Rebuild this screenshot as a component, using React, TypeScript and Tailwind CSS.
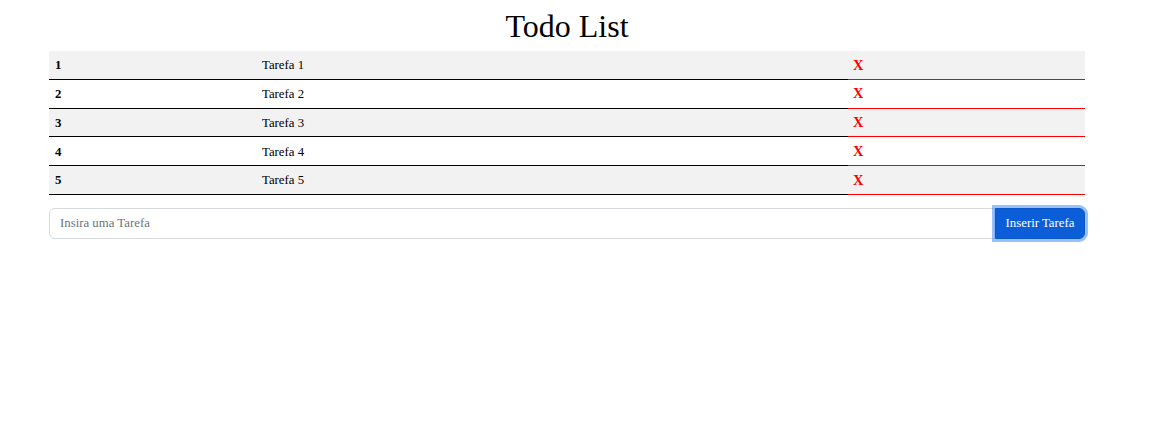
import { useState } from "react";

const initialTasks = ["Tarefa 1", "Tarefa 2", "Tarefa 3", "Tarefa 4", "Tarefa 5"];

export default function App() {
  const [tasks, setTasks] = useState(initialTasks);
  const [text, setText] = useState("");

  const addTask = () => {
    if (!text.trim()) return;
    setTasks([...tasks, text.trim()]);
    setText("");
  };

  return (
    <div className="min-h-screen bg-white text-black font-['Liberation_Serif',serif]">
      <div className="ml-[49px] w-[1036px] pt-[8px]">
        <h1 className="text-center text-[32px] leading-[37px] mb-[6px]">Todo List</h1>

        <div className="flex flex-col">
          {tasks.map((task, i) => (
            <TaskRow
              key={i}
              index={i + 1}
              label={task}
              striped={i % 2 === 0}
              onRemove={() => setTasks(tasks.filter((_, j) => j !== i))}
            />
          ))}
        </div>

        <div className="mt-[13px] flex items-stretch">
          <input
            value={text}
            onChange={(e) => setText(e.target.value)}
            placeholder="Insira uma Tarefa"
            className="h-[31px] flex-1 rounded-l-[6px] border border-[#d6d9dd] px-[10px] text-[12.8px] outline-none placeholder:text-[#6c757d]"
          />
          <button
            onClick={addTask}
            className="h-[31px] w-[90px] rounded-r-[6px] border border-[#0a58ca] bg-[#0b5ed7] text-[12.8px] text-white shadow-[0_0_0_3px_rgba(49,132,253,0.5)]"
          >
            Inserir Tarefa
          </button>
        </div>
      </div>
    </div>
  );
}

function TaskRow({
  index,
  label,
  striped,
  onRemove,
}: {
  index: number;
  label: string;
  striped: boolean;
  onRemove: () => void;
}) {
  return (
    <div className={`flex h-[28.8px] text-[12.8px] ${striped ? "bg-[#f2f2f2]" : "bg-white"}`}>
      <div className="flex w-[207px] items-center border-b border-black px-[6px] pt-[2px] font-bold">{index}</div>
      <div className="flex w-[592px] items-center border-b border-black px-[6px] pt-[2px]">{label}</div>
      <div className="flex flex-1 items-center border-b border-[#ff0000] px-[5px]">
        <button onClick={onRemove} className="text-[14.5px] font-bold leading-none text-[#ff0000]">
          X
        </button>
      </div>
    </div>
  );
}
